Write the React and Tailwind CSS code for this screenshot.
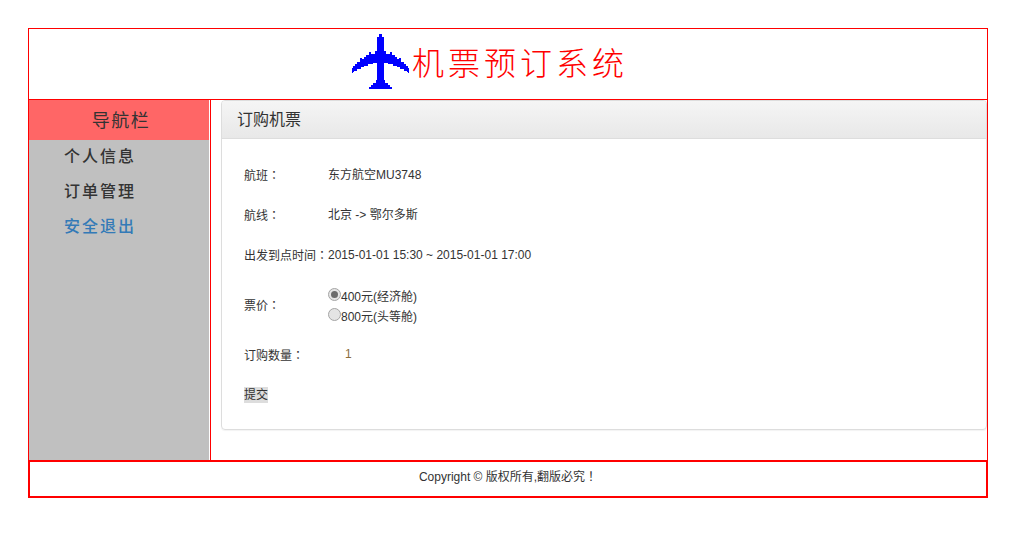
const font = "font-['Liberation_Sans','Noto_Sans_CJK_SC',sans-serif]";
const punct = "font-['Noto_Sans_CJK_TC',sans-serif]";

function Plane() {
  return (
    <svg width="58" height="55" viewBox="0 0 58 55" shapeRendering="crispEdges" className="mb-[5px] shrink-0">
      <path
        fill="#0000ff"
        d="M27 0H30V3H32V17H34V20H38V18H40V21H43V23H45V25H47V24H49V28H52V30H54V32H56V34H57V39H56V38H55V37H52V35H48V33H45V32H41V30H36V29H32V46H33V49H36V51H38V53H40V55H17V53H19V51H21V49H24V46H25V29H21V30H16V32H12V33H9V35H5V37H2V38H1V39H0V34H1V32H3V30H5V28H8V24H10V25H12V23H14V21H17V18H19V20H23V17H25V3H27Z"
      />
    </svg>
  );
}

function Row({ label, children, className, labelClass = "" }) {
  return (
    <div className={`flex items-center ${className}`}>
      <div className={`w-[84px] shrink-0 whitespace-nowrap ${labelClass}`}>
        {label}
        <span className={punct}>：</span>
      </div>
      <div>{children}</div>
    </div>
  );
}

function Radio({ checked, label }) {
  return (
    <div className="flex h-[20px] items-center">
      <span className="flex h-[13px] w-[13px] -translate-y-[3px] items-center justify-center rounded-full border border-[#a5a5a5] bg-[#e4e4e4]">
        {checked ? <span className="h-[7px] w-[7px] rounded-full bg-[#6b6b6b]" /> : null}
      </span>
      <span>{label}</span>
    </div>
  );
}

export default function App() {
  return (
    <div className={`${font} h-[541px] w-[1030px] bg-white pt-[28px] pl-[28px] text-[12px] text-[#333]`}>
      <div className="w-[960px]">
        <header className="flex h-[72px] items-center justify-center border border-[#f00]">
          <div className="flex items-center pr-[36px]">
            <Plane />
            <span className="ml-[2px] pb-[6px] text-[32px] leading-none tracking-[4px] text-[#f00] font-['Noto_Sans_CJK_SC',sans-serif] font-light">
              机票预订系统
            </span>
          </div>
        </header>

        <div className="flex h-[360px] border-x border-[#f00]">
          <aside className="flex w-[180px] shrink-0 flex-col bg-[#c0c0c0]">
            <div className="flex h-[40px] items-center justify-center bg-[#ff6666] pb-[2px] pl-[4px] text-[18px] tracking-[1.5px] font-['Noto_Sans_CJK_SC',sans-serif]">
              导航栏
            </div>
            <nav className="flex flex-col gap-[11px] pt-[3px] pl-[35px] text-[16px] leading-[24px] font-medium tracking-[2px] font-['Noto_Sans_CJK_SC',sans-serif]">
              <a>个人信息</a>
              <a>订单管理</a>
              <a className="text-[#337ab7]">安全退出</a>
            </nav>
          </aside>
          <div className="w-[1px] shrink-0 bg-white" />
          <main className="flex min-w-0 flex-1 border-l border-[#f00] pl-[10px]">
            <section className="flex h-[330px] flex-1 flex-col overflow-hidden rounded-[4px] border border-[#ddd] shadow-[0_1px_1px_rgba(0,0,0,0.05)]">
              <div className="flex h-[38px] shrink-0 items-center border-b border-[#ddd] bg-gradient-to-b from-[#f5f5f5] to-[#e8e8e8] pl-[15px] text-[16px]">
                订购机票
              </div>
              <div className="flex flex-col pt-[26px] pl-[22px]">
                <Row label="航班" className="h-[20px]">东方航空MU3748</Row>
                <Row label="航线" className="mt-[20px] h-[20px]">北京 -&gt; 鄂尔多斯</Row>
                <Row label="出发到点时间" className="mt-[20px] h-[20px]">2015-01-01 15:30 ~ 2015-01-01 17:00</Row>
                <Row label="票价" labelClass="-translate-y-[1px]" className="mt-[21px] h-[40px]">
                  <div className="translate-y-[1px]">
                    <Radio checked label="400元(经济舱)" />
                    <Radio label="800元(头等舱)" />
                  </div>
                </Row>
                <Row label="订购数量" className="mt-[19px] h-[20px]">
                  <span className="-translate-y-[1px] inline-block pl-[17px] text-[#8a6d3b]">1</span>
                </Row>
                <div className="mt-[21px]">
                  <span className="inline-block h-[16px] bg-[#ddd] leading-[16px]">提交</span>
                </div>
              </div>
            </section>
          </main>
        </div>

        <footer className="flex h-[38px] items-center justify-center border-2 border-[#f00] pb-[5px]">
          <span>
            Copyright © 版权所有,翻版必究<span className={punct}>！</span>
          </span>
        </footer>
      </div>
    </div>
  );
}
